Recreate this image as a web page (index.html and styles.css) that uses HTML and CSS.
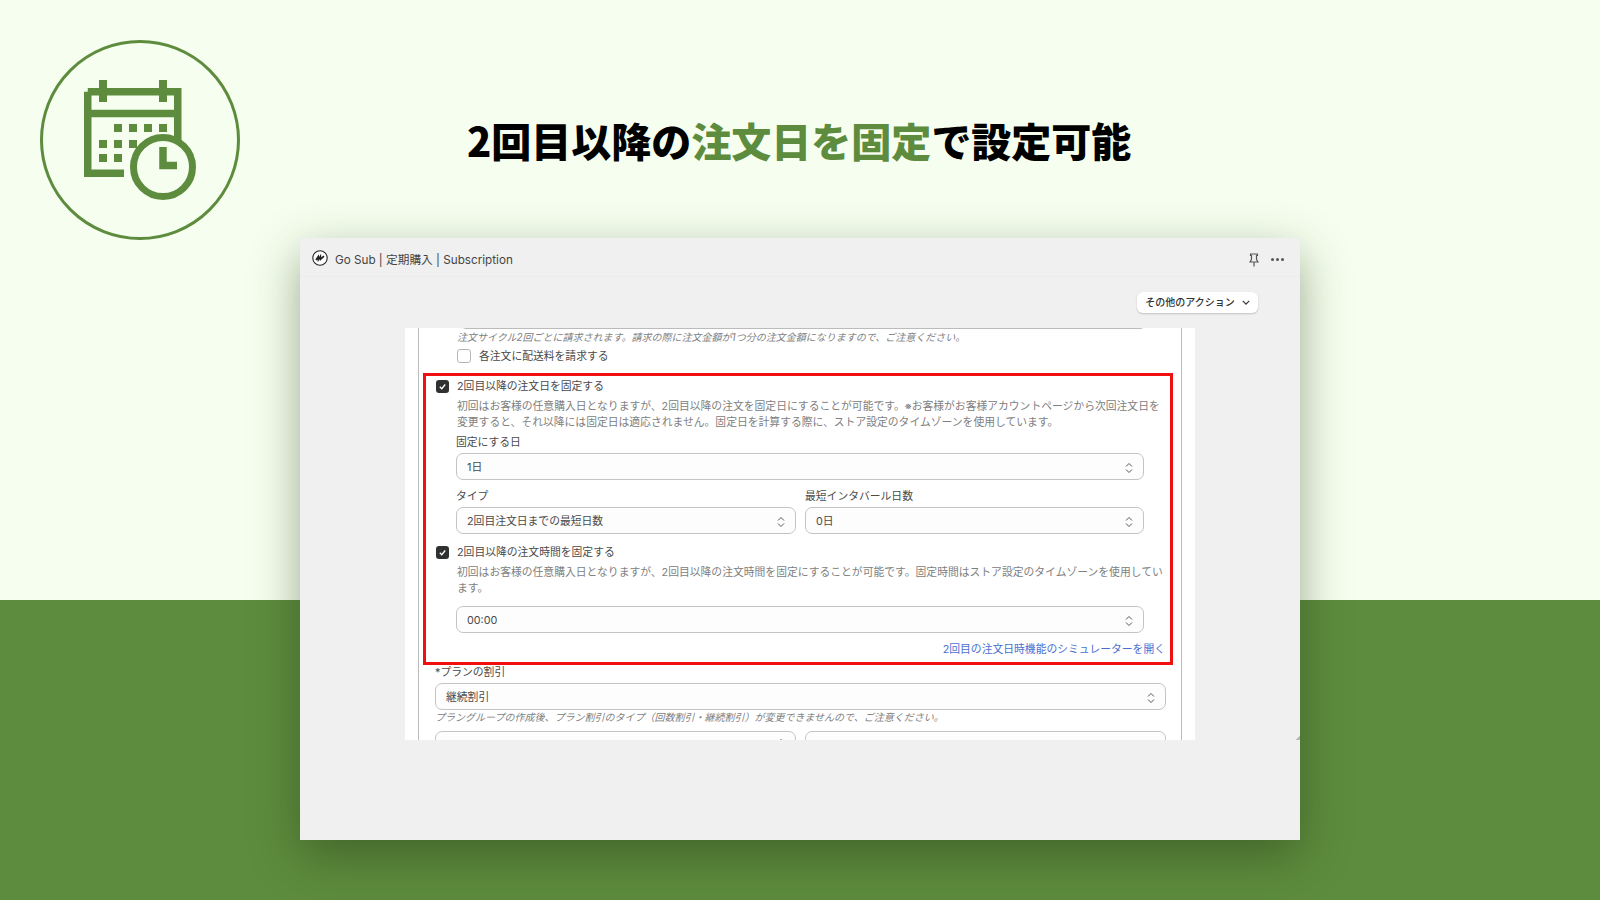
FILE: index.html
```html
<!DOCTYPE html>
<html lang="ja">
<head>
    <meta charset="UTF-8">
    <meta name="viewport" content="width=device-width, initial-scale=1.0">
    <title>Go Sub</title>
    <link rel="stylesheet" href="styles.css">
</head>

<body>

<!-- Top Section -->
<header class="hero">
    <div class="hero-badge">
        <svg class="hero-icon" viewBox="0 0 120 120" width="120" height="120">
            <!-- calendar frame -->
            <path class="cal-line" d="M7.750 11.750H97.750V68M44 93.250H7.750V11.750M7.750 33.500H97.750" />
            <path class="cal-peg" d="M23 0V22M83 0V22" />
            <!-- days -->
            <g class="cal-days">
                <rect x="34" y="44" width="8" height="8" />
                <rect x="49" y="44" width="8" height="8" />
                <rect x="64" y="44" width="8" height="8" />
                <rect x="79" y="44" width="8" height="8" />
                <rect x="19" y="60" width="8" height="8" />
                <rect x="34" y="60" width="8" height="8" />
                <rect x="49" y="60" width="8" height="8" />
                <rect x="19" y="74" width="8" height="8" />
                <rect x="34" y="74" width="8" height="8" />
            </g>
            <!-- clock -->
            <circle class="cal-clock" cx="83" cy="87" r="29.500" />
            <path class="cal-line" d="M83 67V85.500H97" />
        </svg>
    </div>
    <h1 class="hero-title">2回目以降の<span class="hero-accent">注文日を固定</span>で設定可能</h1>
</header>

<!-- App Window -->
<main class="window">
    <div class="titlebar">
        <svg class="app-logo" viewBox="0 0 16 16" width="16" height="16">
            <circle cx="8" cy="8" r="7.200" fill="#fff" stroke="#222" stroke-width="1.100" />
            <path d="M4 10 6.200 6.800 6.400 9.600 8.400 6.400 8.600 9.200 12 6.200" fill="none" stroke="#222" stroke-width="1.700" />
        </svg>
        <span class="app-name">Go Sub | 定期購入 | Subscription</span>
        <div class="titlebar-tools">
            <svg viewBox="0 0 10 14" width="10" height="14" class="tool-icon">
                <path d="M1.500 1H8.500V2.500H7.500V6.500L9 9H1L2.500 6.500V2.500H1.500ZM5 9V13.500" />
            </svg>
            <span class="tool-dots"><i></i><i></i><i></i></span>
        </div>
    </div>

    <div class="actions">
        <button class="action-btn">その他のアクション
            <svg viewBox="0 0 10 6" width="8" height="5" class="action-chevron"><path d="M1 1 5 5 9 1" /></svg>
        </button>
    </div>

    <div class="sheet">
        <div class="sheet-inner">
            <div class="indent">
                <div class="clipped-input"></div>
                <p class="hint">注文サイクル2回ごとに請求されます。請求の際に注文金額が1つ分の注文金額になりますので、ご注意ください。</p>
                <label class="check-row check-row-plain">
                    <span class="checkbox"></span>
                    <span class="check-text">各注文に配送料を請求する</span>
                </label>
            </div>

            <!-- Highlighted block -->
            <section class="highlight">
                <div class="check-row">
                    <span class="checkbox is-on"><svg viewBox="0 0 10 10" width="9" height="9"><path d="M2 5.200 4.200 7.400 8 2.800" /></svg></span>
                    <span class="check-text">2回目以降の注文日を固定する</span>
                </div>
                <div class="group">
                    <p class="desc">初回はお客様の任意購入日となりますが、2回目以降の注文を固定日にすることが可能です。※お客様がお客様アカウントページから次回注文日を変更すると、それ以降には固定日は適応されません。固定日を計算する際に、ストア設定のタイムゾーンを使用しています。</p>
                    <div class="field field-first">
                        <div class="field-label">固定にする日</div>
                        <div class="select">1日<svg class="updown" viewBox="0 0 8 12" width="8" height="12"><path d="M1 4.500 4 1.500 7 4.500M1 7.500 4 10.500 7 7.500" /></svg></div>
                    </div>
                    <div class="field-row">
                        <div class="field">
                            <div class="field-label">タイプ</div>
                            <div class="select">2回目注文日までの最短日数<svg class="updown" viewBox="0 0 8 12" width="8" height="12"><path d="M1 4.500 4 1.500 7 4.500M1 7.500 4 10.500 7 7.500" /></svg></div>
                        </div>
                        <div class="field">
                            <div class="field-label">最短インタバール日数</div>
                            <div class="select">0日<svg class="updown" viewBox="0 0 8 12" width="8" height="12"><path d="M1 4.500 4 1.500 7 4.500M1 7.500 4 10.500 7 7.500" /></svg></div>
                        </div>
                    </div>
                </div>

                <div class="check-row check-row-second">
                    <span class="checkbox is-on"><svg viewBox="0 0 10 10" width="9" height="9"><path d="M2 5.200 4.200 7.400 8 2.800" /></svg></span>
                    <span class="check-text">2回目以降の注文時間を固定する</span>
                </div>
                <div class="group">
                    <p class="desc">初回はお客様の任意購入日となりますが、2回目以降の注文時間を固定にすることが可能です。固定時間はストア設定のタイムゾーンを使用しています。</p>
                    <div class="select select-time">00:00<svg class="updown" viewBox="0 0 8 12" width="8" height="12"><path d="M1 4.500 4 1.500 7 4.500M1 7.500 4 10.500 7 7.500" /></svg></div>
                </div>
                <a class="sim-link">2回目の注文日時機能のシミュレーターを開く</a>
            </section>

            <!-- Discount -->
            <div class="discount">
                <div class="field-label">*プランの割引</div>
                <div class="select">継続割引<svg class="updown" viewBox="0 0 8 12" width="8" height="12"><path d="M1 4.500 4 1.500 7 4.500M1 7.500 4 10.500 7 7.500" /></svg></div>
                <p class="hint hint-tight">プラングループの作成後、プラン割引のタイプ（回数割引・継続割引）が変更できませんので、ご注意ください。</p>
                <div class="discount-row">
                    <div class="select"><svg class="updown" viewBox="0 0 8 12" width="8" height="12"><path d="M1 4.500 4 1.500 7 4.500M1 7.500 4 10.500 7 7.500" /></svg></div>
                    <div class="select"></div>
                </div>
            </div>
        </div>
    </div>
    <span class="resize-mark"></span>
</main>

</body>
</html>
```

FILE: styles.css
```css
html, body {
    margin: 0;
    padding: 0;
    height: 100%;
}

body {
    width: 1600px;
    height: 900px;
    overflow: hidden;
    background: linear-gradient(#f6ffef 600px, #5e8c3e 600px);
    font-family: "Inter", "Noto Sans CJK JP", sans-serif;
    color: #4a4a4a;
}

p {
    margin: 0;
}

/* Top Section */
.hero {
    height: 238px;
    box-sizing: border-box;
    padding: 40px 0 0 40px;
    display: flex;
    align-items: flex-start;
}

.hero-badge {
    width: 200px;
    height: 200px;
    box-sizing: border-box;
    border: 3px solid #5e8c3e;
    border-radius: 50%;
    display: flex;
    justify-content: center;
    align-items: center;
}

.cal-line {
    fill: none;
    stroke: #5e8c3e;
    stroke-width: 7.500;
}

.cal-peg {
    fill: none;
    stroke: #5e8c3e;
    stroke-width: 8;
}

.cal-days rect {
    fill: #5e8c3e;
}

.cal-clock {
    fill: #f6ffef;
    stroke: #5e8c3e;
    stroke-width: 7;
}

.hero-title {
    margin: 75px 0 0 227px;
    font-family: "Noto Sans CJK JP", sans-serif;
    font-size: 40px;
    font-weight: 900;
    line-height: 50px;
    color: #000;
}

.hero-accent {
    color: #5e8c3e;
}

/* App Window */
.window {
    position: relative;
    width: 1000px;
    height: 602px;
    margin: 0 auto;
    background: #f0f0f0;
    box-shadow: 0 16px 45px rgba(30, 50, 15, 0.42);
    display: flex;
    flex-direction: column;
}

.resize-mark {
    position: absolute;
    right: 0;
    top: 498px;
    width: 4px;
    height: 4px;
    background: linear-gradient(135deg, transparent 50%, #b8b8b8 50%);
}

.titlebar {
    height: 38px;
    flex: none;
    box-sizing: border-box;
    padding: 0 16px 0 12px;
    margin-top: 1px;
    border-bottom: 1px solid #ececec;
    display: flex;
    align-items: center;
}

.app-name {
    margin: 1px 0 0 7px;
    font-size: 11.700px;
    color: #444;
}

.titlebar-tools {
    margin: 4px 0 0 auto;
    display: flex;
    align-items: center;
    gap: 12px;
}

.tool-icon {
    fill: none;
    stroke: #555;
    stroke-width: 1.200;
}

.tool-dots {
    display: flex;
    gap: 2px;
}

.tool-dots i {
    width: 3px;
    height: 3px;
    border-radius: 50%;
    background: #555;
}

.actions {
    height: 51px;
    flex: none;
    box-sizing: border-box;
    padding: 15px 42px 0 0;
    display: flex;
    justify-content: flex-end;
    align-items: flex-start;
}

.action-btn {
    height: 21px;
    width: 121px;
    padding: 0 0 2px;
    border: none;
    border-radius: 6px;
    background: #fff;
    box-shadow: 0 1px 2px rgba(0, 0, 0, 0.2);
    font-family: inherit;
    font-size: 10px;
    font-weight: 500;
    color: #333;
    display: flex;
    justify-content: center;
    align-items: center;
    gap: 7px;
}

.action-chevron {
    margin-top: 2px;
    fill: none;
    stroke: #333;
    stroke-width: 1.500;
}

/* Form Sheet */
.sheet {
    width: 790px;
    height: 412px;
    flex: none;
    margin-left: 105px;
    background: #fff;
    overflow: hidden;
}

.sheet-inner {
    display: flow-root;
    height: 100%;
    margin: 0 13px;
    padding: 0 8px 0 4px;
    border-left: 1px solid #bbb;
    border-right: 1px solid #bbb;
    font-size: 10.800px;
    line-height: 16px;
}

.indent {
    padding-left: 34px;
}

.clipped-input {
    width: 686px;
    height: 20px;
    margin-top: -19px;
    margin-left: 3px;
    box-sizing: border-box;
    border: 1px solid #bbb;
    border-radius: 6px;
}

.hint {
    margin-top: 0;
    font-style: italic;
    font-size: 10px;
    color: #808080;
    line-height: 16px;
}

.check-row {
    display: flex;
    align-items: center;
    height: 16px;
    gap: 8px;
}

.check-text {
    padding-top: 2px;
}

.check-row-plain {
    margin-top: 3px;
}

.check-row-second {
    margin-top: 10px;
}

.checkbox {
    width: 13px;
    height: 13px;
    flex: none;
    box-sizing: border-box;
    border: 1px solid #b5b5b5;
    border-radius: 3px;
    background: #fff;
    display: flex;
    justify-content: center;
    align-items: center;
}

.check-row-plain .checkbox {
    width: 14px;
    height: 14px;
}

.checkbox.is-on {
    border: none;
    background: #303030;
}

.checkbox svg {
    fill: none;
    stroke: #fff;
    stroke-width: 1.500;
}

/* Highlighted block */
.highlight {
    height: 292px;
    box-sizing: border-box;
    margin-top: 9px;
    border: 3px solid #f01010;
    padding: 2px 5px 0 10px;
}

.group {
    padding-left: 20px;
    margin-top: 5px;
}

.desc {
    padding-left: 1px;
    padding-right: 1px;
    color: #808080;
}

.field-first {
    margin-top: 4px;
}

.field-label {
    color: #4a4a4a;
    line-height: 16px;
}

.select {
    height: 27px;
    box-sizing: border-box;
    margin-top: 2px;
    padding: 2px 10px 0;
    border: 1px solid #c4c4c4;
    border-radius: 7px;
    background: #fdfdfd;
    color: #4a4a4a;
    display: flex;
    align-items: center;
}

.group .select {
    margin-right: 21px;
}

.updown {
    margin-left: auto;
    fill: none;
    stroke: #555;
    stroke-width: 1;
}

.field-row {
    display: grid;
    grid-template-columns: 340px 339px;
    gap: 9px;
    margin-top: 9px;
}

.group .field-row .select {
    margin: 2px 0 0;
}

.group .select-time {
    margin-top: 9px;
}

.sim-link {
    display: block;
    margin-top: 9px;
    text-align: right;
    color: #4a6fd0;
}

/* Discount */
.discount {
    padding: 0 7px 0 12px;
}

.hint-tight {
    margin-top: -1px;
}

.discount-row {
    display: grid;
    grid-template-columns: 361px 361px;
    gap: 9px;
    margin-top: 6px;
}

.discount-row .select {
    margin-top: 0;
    padding-top: 6px;
    align-items: flex-start;
}
```
